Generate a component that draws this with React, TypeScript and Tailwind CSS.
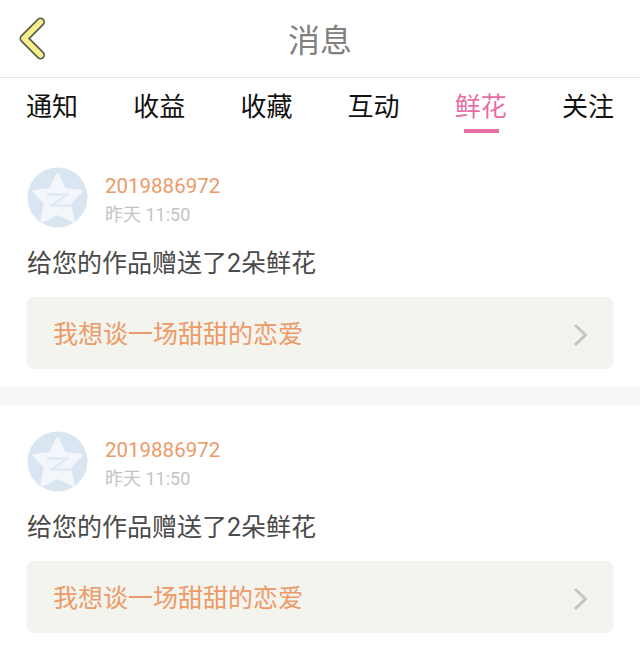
const cjk = { fontFamily: '"Roboto", "Noto Sans CJK SC", sans-serif' };

const tabs = ["通知", "收益", "收藏", "互动", "鲜花", "关注"];

function QqAvatar() {
  return (
    <svg width="61" height="61" viewBox="0 0 61 61" className="shrink-0">
      <circle cx="30.5" cy="30.5" r="30" fill="#d9e5f0" />
      <path
        d="M30.5 8 37.5 22.5 54 24.5 42.5 36 46 54 30.5 46.5 15 54 18.5 36 7 24.5 23.5 22.5Z"
        fill="#f3f7fb"
        stroke="#f3f7fb"
        strokeWidth="3"
        strokeLinejoin="round"
      />
      <path d="M20 27.5H41L24 38.5H44" fill="none" stroke="#dfe9f2" strokeWidth="2.5" strokeLinejoin="round" />
    </svg>
  );
}

function Message() {
  return (
    <div className="px-[27px] pt-[26px] pb-[18px]">
      <div className="flex items-center gap-[17px]">
        <QqAvatar />
        <div className="flex flex-col pt-[3px]">
          <span className="text-[20.5px] leading-[30px] text-[#ec9a68]">2019886972</span>
          <span className="text-[18px] leading-[27px] text-[#c4c4c4]">昨天 11:50</span>
        </div>
      </div>
      <p className="mt-[18px] text-[25px] leading-[36px] text-[#4a4a4a]">给您的作品赠送了2朵鲜花</p>
      <div className="mt-[15px] flex h-[72px] items-center justify-between rounded-[6px] bg-[#f4f4ee] pl-[26px] pr-[25px] pt-[3px]">
        <span className="text-[25px] text-[#ec9a68]">我想谈一场甜甜的恋爱</span>
        <svg width="14" height="22" viewBox="0 0 14 22" fill="none">
          <path d="M2 2 11.5 11 2 20" stroke="#c4c4c0" strokeWidth="3" strokeLinecap="round" strokeLinejoin="round" />
        </svg>
      </div>
    </div>
  );
}

export default function App() {
  return (
    <div className="h-[650px] w-[640px] overflow-hidden bg-white" style={cjk}>
      <header className="relative flex h-[78px] items-center justify-center border-b border-[#e6e6e6] pt-[4px]">
        <svg width="30" height="46" viewBox="0 0 30 46" className="absolute left-[18px] top-[17px]">
          <path
            d="M22.5 5 6 21.5 22.5 38"
            fill="none"
            stroke="#5c5c50"
            strokeWidth="9"
            strokeLinecap="round"
            strokeLinejoin="round"
          />
          <path
            d="M22.5 5 6 21.5 22.5 38"
            fill="none"
            stroke="#f6f08a"
            strokeWidth="5.5"
            strokeLinecap="round"
            strokeLinejoin="round"
          />
        </svg>
        <h1 className="text-[32px] font-normal text-[#808080]">消息</h1>
      </header>
      <nav className="flex h-[63px] justify-between px-[26px]">
        {tabs.map((t) => (
          <div key={t} className="relative pt-[10px]">
            <span className={`text-[26px] leading-[38px] ${t === "鲜花" ? "text-[#e86fa4]" : "text-[#111111]"}`}>{t}</span>
            {t === "鲜花" && <div className="absolute top-[51px] left-[9px] h-[4px] w-[35px] bg-[#e86fa4]" />}
          </div>
        ))}
      </nav>
      <Message />
      <div className="h-[18px] bg-[#f7f7f7]" />
      <Message />
    </div>
  );
}
